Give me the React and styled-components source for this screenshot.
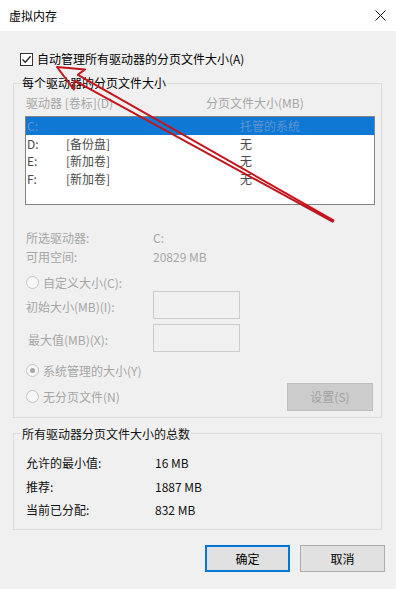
import React from 'react';
import styled, { createGlobalStyle } from 'styled-components';

const GlobalStyle = createGlobalStyle`
  html, body { margin: 0; padding: 0; background: #f0f0f0; }
  body {
    font-family: "Noto Sans CJK SC", "Noto Sans", sans-serif;
    font-size: 12px;
    color: #000;
  }
`;

const drives = [
  { letter: 'C:', label: '', size: '托管的系统', selected: true },
  { letter: 'D:', label: '[备份盘]', size: '无' },
  { letter: 'E:', label: '[新加卷]', size: '无' },
  { letter: 'F:', label: '[新加卷]', size: '无' },
];

const totals = [
  ['允许的最小值:', '16 MB'],
  ['推荐:', '1887 MB'],
  ['当前已分配:', '832 MB'],
];

// red annotation arrow drawn over the dialog
const Arrow = () => (
  <ArrowLayer width="396" height="589" viewBox="0 0 396 589">
    <polygon
      points="57,67 85,69.4 77.9,74.8 333.4,220.3 332.6,221.7 74.5,80.6 73.8,89.4"
      fill="none"
      stroke="#c4151c"
      strokeWidth="2"
      strokeLinejoin="round"
    />
  </ArrowLayer>
);

const App = () => {
  return (
    <>
      <GlobalStyle />
      <Window>
        <TitleBar>
          <Title>虚拟内存</Title>
          <CloseBtn>
            <svg width="11" height="11" viewBox="0 0 11 11">
              <path d="M0.5 0.5 L10.5 10.5 M10.5 0.5 L0.5 10.5" stroke="#111" strokeWidth="1" />
            </svg>
          </CloseBtn>
        </TitleBar>

        <Body>
          <CheckRow>
            <CheckBox>
              <svg width="11" height="11" viewBox="0 0 11 11">
                <path d="M1.5 5.5 L4.3 8.3 L9.6 2.2" fill="none" stroke="#222" strokeWidth="1.3" />
              </svg>
            </CheckBox>
            <span>自动管理所有驱动器的分页文件大小(A)</span>
          </CheckRow>

          <Group $pb={6}>
            <Legend>每个驱动器的分页文件大小</Legend>
            <ColHeader>
              <span>驱动器 [卷标](D)</span>
              <span>分页文件大小(MB)</span>
            </ColHeader>
            <ListBox>
              {drives.map((d) => (
                <ListRow key={d.letter} $selected={d.selected}>
                  <Cell $w={39}>{d.letter}</Cell>
                  <Cell $w={174}>{d.label}</Cell>
                  <Cell>{d.size}</Cell>
                </ListRow>
              ))}
            </ListBox>

            <InfoBlock>
              <InfoRow>
                <InfoLabel>所选驱动器:</InfoLabel>
                <span>C:</span>
              </InfoRow>
              <InfoRow>
                <InfoLabel>可用空间:</InfoLabel>
                <span>20829 MB</span>
              </InfoRow>
            </InfoBlock>

            <RadioRow $mt={9}>
              <Radio />
              <span>自定义大小(C):</span>
            </RadioRow>
            <FieldRow $mt={0}>
              <FieldLabel>初始大小(MB)(I):</FieldLabel>
              <TextBox />
            </FieldRow>
            <FieldRow $mt={5}>
              <FieldLabel $indent={2}>最大值(MB)(X):</FieldLabel>
              <TextBox />
            </FieldRow>
            <RadioRow $mt={11}>
              <Radio $checked />
              <span>系统管理的大小(Y)</span>
            </RadioRow>
            <BottomRow>
              <RadioRow $mt={0}>
                <Radio />
                <span>无分页文件(N)</span>
              </RadioRow>
              <SetButton>设置(S)</SetButton>
            </BottomRow>
          </Group>

          <Group $mt={8} $pb={7}>
            <Legend $dark>所有驱动器分页文件大小的总数</Legend>
            <TotalsBlock>
              {totals.map(([k, v]) => (
                <TotalRow key={k}>
                  <TotalLabel>{k}</TotalLabel>
                  <span>{v}</span>
                </TotalRow>
              ))}
            </TotalsBlock>
          </Group>

          <ButtonRow>
            <DlgButton $default>确定</DlgButton>
            <DlgButton>取消</DlgButton>
          </ButtonRow>
        </Body>
        <Arrow />
      </Window>
    </>
  );
};

const Window = styled.div`
  position: relative;
  width: 396px;
  height: 589px;
  overflow: hidden;
  background: #f0f0f0;
`;

const TitleBar = styled.div`
  height: 31px;
  background: #fff;
  display: flex;
  align-items: center;
  justify-content: space-between;
  padding: 0 10px 0 9px;
`;

const Title = styled.div`
  font-size: 12px;
  line-height: 16px;
  color: #000;
`;

const CloseBtn = styled.div`
  width: 11px;
  height: 11px;
  margin-right: 0;
  display: flex;
`;

const Body = styled.div`
  padding: 20px 14px 0 13px;
`;

const CheckRow = styled.div`
  height: 16px;
  display: flex;
  align-items: center;
  gap: 4px;
  padding-left: 7px;
  line-height: 16px;
`;

const CheckBox = styled.div`
  width: 11px;
  height: 11px;
  border: 1px solid #333;
  background: #fff;
  display: flex;
`;

const Group = styled.fieldset`
  margin: ${(p) => p.$mt || 8}px 0 0 0;
  padding: 0 8px ${(p) => p.$pb}px 12px;
  border: 1px solid #dcdcdc;
  min-inline-size: 0;
`;

const Legend = styled.legend`
  margin-left: -5px;
  padding: 0 1px;
  line-height: 16px;
  color: ${(p) => (p.$dark ? '#111' : '#000')};
`;

const ColHeader = styled.div`
  margin-top: 4px;
  height: 16px;
  line-height: 16px;
  display: flex;
  gap: 0;
  color: #a6a6a6;

  span:first-child {
    width: 180px;
  }
`;

const ListBox = styled.div`
  margin: 5px -2px 0 -1px;
  height: 89px;
  box-sizing: border-box;
  border: 1px solid #828282;
  background: #fff;
`;

const ListRow = styled.div`
  height: 17.5px;
  line-height: 17.5px;
  display: flex;
  padding-left: 1px;
  background: ${(p) => (p.$selected ? '#0f77d4' : 'transparent')};
  color: ${(p) => (p.$selected ? '#5e95cf' : '#4a4a4a')};
`;

const Cell = styled.span`
  width: ${(p) => (p.$w ? `${p.$w}px` : 'auto')};
  flex-shrink: 0;
`;

const InfoBlock = styled.div`
  margin-top: 22.5px;
  color: #a6a6a6;
`;

const InfoRow = styled.div`
  height: 19px;
  line-height: 19px;
  display: flex;
`;

const InfoLabel = styled.span`
  width: 127px;
`;

const RadioRow = styled.div`
  margin-top: ${(p) => p.$mt}px;
  height: 16px;
  line-height: 16px;
  display: flex;
  align-items: center;
  gap: 4px;
  color: #a6a6a6;
`;

const Radio = styled.span`
  width: 11px;
  height: 11px;
  border-radius: 50%;
  border: 1px solid #c4c4c4;
  background: #f7f7f7;
  display: flex;
  align-items: center;
  justify-content: center;

  &::after {
    content: '';
    display: ${(p) => (p.$checked ? 'block' : 'none')};
    width: 5px;
    height: 5px;
    border-radius: 50%;
    background: #a8a8a8;
  }
`;

const FieldRow = styled.div`
  margin-top: ${(p) => p.$mt}px;
  display: flex;
  align-items: center;
  height: 28px;
  color: #a6a6a6;
`;

const FieldLabel = styled.span`
  width: ${(p) => 127 - (p.$indent || 0)}px;
  padding-left: ${(p) => p.$indent || 0}px;
  padding-top: 3px;
`;

const TextBox = styled.div`
  width: 87px;
  height: 28px;
  box-sizing: border-box;
  border: 1px solid #cccccc;
  background: #f0f0f0;
`;

const BottomRow = styled.div`
  margin-top: 4px;
  height: 28px;
  display: flex;
  align-items: center;
  justify-content: space-between;
`;

const SetButton = styled.div`
  width: 86px;
  height: 28px;
  box-sizing: border-box;
  border: 1px solid #bfbfbf;
  background: #cccccc;
  color: #a0a0a0;
  display: flex;
  align-items: center;
  justify-content: center;
`;

const TotalsBlock = styled.div`
  margin-top: 9.5px;
`;

const TotalRow = styled.div`
  height: 23.5px;
  line-height: 23.5px;
  display: flex;
  color: #111;
`;

const TotalLabel = styled.span`
  width: 129px;
`;

const ButtonRow = styled.div`
  margin: 15px -3px 0 0;
  display: flex;
  justify-content: flex-end;
  gap: 10px;
`;

const DlgButton = styled.div`
  width: 85px;
  height: 27px;
  box-sizing: border-box;
  border: ${(p) => (p.$default ? '2px solid #0078d7' : '1px solid #adadad')};
  background: #e1e1e1;
  display: flex;
  align-items: center;
  justify-content: center;
  color: #000;
`;

const ArrowLayer = styled.svg`
  position: absolute;
  left: 0;
  top: 0;
  pointer-events: none;
`;

export default App;
